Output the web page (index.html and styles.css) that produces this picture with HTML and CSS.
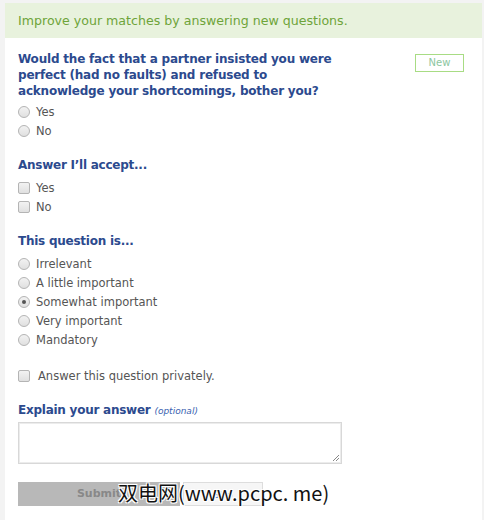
FILE: index.html
```html
<!DOCTYPE html>
<html>
<head>
<meta charset="utf-8">
<link rel="stylesheet" href="styles.css">
</head>
<body>
<div class="page">
  <div class="banner">Improve your matches by answering new questions.</div>
  <div class="panel">
    <div class="qhead">
      <h2 class="question">Would the fact that a partner insisted you were perfect (had no faults) and refused to acknowledge your shortcomings, bother you?</h2>
      <span class="new-badge">New</span>
    </div>
    <ul class="opts">
      <li><span class="radio"></span>Yes</li>
      <li><span class="radio"></span>No</li>
    </ul>
    <h3 class="sub">Answer I’ll accept...</h3>
    <ul class="opts">
      <li><span class="check"></span>Yes</li>
      <li><span class="check"></span>No</li>
    </ul>
    <h3 class="sub">This question is...</h3>
    <ul class="opts">
      <li><span class="radio"></span>Irrelevant</li>
      <li><span class="radio"></span>A little important</li>
      <li><span class="radio on"></span>Somewhat important</li>
      <li><span class="radio"></span>Very important</li>
      <li><span class="radio"></span>Mandatory</li>
    </ul>
    <div class="private"><span class="check"></span>Answer this question privately.</div>
    <h3 class="sub explain">Explain your answer <em class="optional">(optional)</em></h3>
    <div class="textarea"><svg class="grip" width="9" height="9" viewBox="0 0 9 9"><path d="M8 2 L2 8 M8 5 L5 8" stroke="#888" stroke-width="1"/></svg></div>
    <div class="buttons">
      <span class="btn submit">Submit</span>
      <span class="btn skip">Skip</span>
      <div class="watermark">双电网(www.pcpc. me)</div>
    </div>
  </div>
</div>
</body>
</html>
```
FILE: styles.css
```css
html, body { margin: 0; padding: 0; }
body {
  background: #f3f3f3;
  font-family: Verdana, "DejaVu Sans", sans-serif;
  width: 484px;
  height: 520px;
  overflow: hidden;
}
.page {
  margin: 3px 2px 0 5px;
  background: #fff;
  height: 517px;
}
.banner {
  background: #e8f2dd;
  color: #6ea43a;
  font-size: 12.6px;
  height: 35px;
  line-height: 35px;
  padding-left: 13px;
}
.panel {
  padding: 13px 0 0 13px;
}
.qhead {
  display: flex;
  justify-content: space-between;
  align-items: flex-start;
  padding-right: 18px;
}
.question {
  margin: 0;
  width: 330px;
  font-size: 12px;
  font-weight: bold;
  line-height: 16px;
  letter-spacing: -0.2px;
  color: #2c4a8e;
}
.new-badge {
  margin-top: 3px;
  width: 47px;
  height: 16px;
  border: 1px solid #a8dc84;
  color: #8cc6a0;
  font-size: 10px;
  line-height: 16px;
  text-align: center;
}
.opts {
  list-style: none;
  margin: 0;
  padding: 3px 0 0 0;
}
.opts li {
  display: flex;
  align-items: center;
  height: 19px;
  font-size: 11.5px;
  color: #555;
}
.radio, .check {
  width: 10px;
  height: 10px;
  border: 1px solid #b4b4b4;
  background: linear-gradient(#f2f2f2, #e0e0e0);
  margin-right: 6px;
  flex: none;
  box-sizing: content-box;
}
.radio { border-radius: 50%; position: relative; }
.radio.on::after {
  content: "";
  position: absolute;
  left: 3px; top: 3px;
  width: 4px; height: 4px;
  border-radius: 50%;
  background: #555;
}
.check { border-radius: 2px; }
.sub {
  margin: 17px 0 2px 0;
  font-size: 12px;
  font-weight: bold;
  line-height: 16px;
  letter-spacing: -0.25px;
  color: #2c4a8e;
}
.private {
  display: flex;
  align-items: center;
  margin-top: 20px;
  font-size: 11.5px;
  color: #555;
}
.private .check { margin-right: 8px; }
.sub.explain { margin-top: 19px; margin-bottom: 0; }
.optional {
  font-weight: normal;
  font-size: 9px;
  letter-spacing: 0;
  color: #3a5fb0;
}
.textarea {
  position: relative;
  margin-top: 3px;
  width: 322px;
  height: 40px;
  border: 1px solid #d8d8d8;
  box-shadow: inset 0 0 0 1px #ececec;
}
.grip { position: absolute; right: 1px; bottom: 1px; }
.buttons {
  position: relative;
  display: flex;
  gap: 3px;
  margin-top: 18px;
}
.btn {
  height: 24px;
  line-height: 24px;
  font-size: 11px;
  text-align: center;
  box-sizing: border-box;
}
.submit {
  width: 162px;
  background: #b8b8b8;
  color: #888;
  font-weight: bold;
}
.skip {
  width: 80px;
  background: #f6f6f6;
  border: 1px solid #ddd;
  color: #4a78c8;
  font-size: 9px;
}
.watermark {
  position: absolute;
  left: 100px;
  top: -1px;
  font-family: "Noto Sans CJK SC", sans-serif;
  font-size: 20px;
  line-height: 24px;
  color: #111;
  text-shadow: 1px 1px 0 #fff, -1px -1px 0 #fff, 1px -1px 0 #fff, -1px 1px 0 #fff;
  white-space: nowrap;
}
```
